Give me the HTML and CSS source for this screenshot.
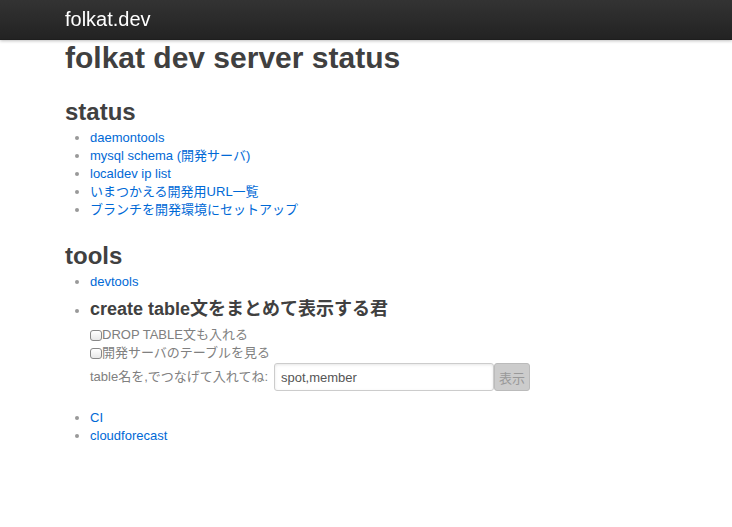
FILE: index.html
```html
<!DOCTYPE html>
<html lang="ja">
<head>
<meta charset="utf-8">
<title>folkat dev server status</title>
<link rel="stylesheet" href="styles.css">
</head>
<body>
<div class="topbar">
  <div class="container">
    <a class="brand" href="#">folkat.dev</a>
  </div>
</div>
<div class="container content">
  <h1>folkat dev server status</h1>
  <h2>status</h2>
  <ul>
    <li><a href="#">daemontools</a></li>
    <li><a href="#">mysql schema (開発サーバ)</a></li>
    <li><a href="#">localdev ip list</a></li>
    <li><a href="#">いまつかえる開発用URL一覧</a></li>
    <li><a href="#">ブランチを開発環境にセットアップ</a></li>
  </ul>
  <h2>tools</h2>
  <ul>
    <li><a href="#">devtools</a></li>
    <li>
      <h3>create table文をまとめて表示する君</h3>
      <form class="tool-form">
        <label class="check"><input type="checkbox">DROP TABLE文も入れる</label>
        <label class="check"><input type="checkbox">開発サーバのテーブルを見る</label>
        <div class="row">
          <span class="label">table名を,でつなげて入れてね:</span>
          <input class="text" type="text" value="spot,member">
          <button class="btn" type="button">表示</button>
        </div>
      </form>
    </li>
    <li><a href="#">CI</a></li>
    <li><a href="#">cloudforecast</a></li>
  </ul>
</div>
</body>
</html>
```
FILE: styles.css
```css
html, body {
  margin: 0;
  padding: 0;
}
body {
  font-family: "Liberation Sans", Arial, "Noto Sans CJK JP", sans-serif;
  font-size: 13px;
  line-height: 18px;
  color: #404040;
  background: #fff;
  padding-top: 40px;
}
a {
  color: #0069d6;
  text-decoration: none;
}
.container {
  padding: 0 65px;
}
.topbar {
  position: fixed;
  top: 0;
  left: 0;
  right: 0;
  height: 40px;
  background: linear-gradient(to bottom, #333333, #222222);
  box-shadow: 0 1px 3px rgba(0, 0, 0, 0.25), inset 0 -1px 0 rgba(0, 0, 0, 0.1);
}
.brand {
  display: block;
  float: left;
  color: #ffffff;
  font-size: 20px;
  font-weight: 200;
  line-height: 1;
  padding: 9px 0 11px;
}
h1, h2, h3 {
  font-weight: bold;
  color: #404040;
  margin: 0;
}
h1 {
  font-size: 30px;
  line-height: 36px;
  margin-bottom: 18px;
}
h2 {
  font-size: 24px;
  line-height: 36px;
  margin-bottom: -1px;
}
h3 {
  font-size: 18px;
  line-height: 36px;
  margin-bottom: -1px;
}
ul {
  margin: 0 0 19px 25px;
  padding: 0;
  list-style: disc;
}
li::marker {
  color: #999;
}
.tool-form {
  color: #808080;
  margin-bottom: 18px;
}
.check {
  display: flex;
  align-items: center;
  height: 18px;
}
.check input {
  -webkit-appearance: none;
  appearance: none;
  width: 12px;
  height: 11px;
  margin: 0;
  border: 1px solid #888;
  border-radius: 3px;
  background: linear-gradient(#fff, #e8e8e8);
}
.row {
  display: flex;
  align-items: center;
  margin-top: 1px;
  height: 28px;
}
.label {
  margin-right: 6px;
}
.text {
  box-sizing: border-box;
  width: 220px;
  height: 28px;
  padding: 4px 6px;
  border: 1px solid #ccc;
  border-radius: 3px;
  font-family: "Liberation Sans", Arial, sans-serif;
  font-size: 13px;
  color: #555;
  box-shadow: inset 0 1px 3px rgba(0, 0, 0, 0.1);
  margin: 0;
}
.btn {
  box-sizing: border-box;
  height: 28px;
  width: 36px;
  margin-left: 0;
  padding: 0;
  border: 1px solid #bbb;
  border-radius: 3px;
  background: #cccccc;
  color: #999;
  font-family: "Liberation Sans", "Noto Sans CJK JP", sans-serif;
  font-size: 13px;
}
```
